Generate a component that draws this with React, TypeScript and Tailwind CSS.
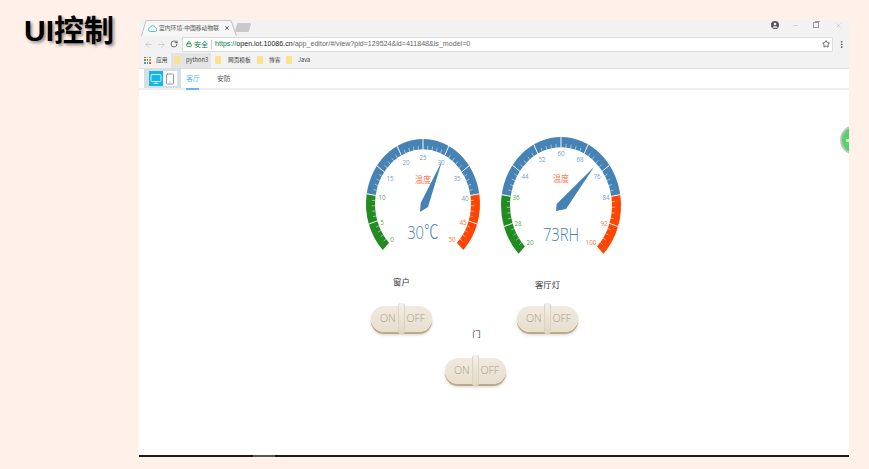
import { ArrowLeft, ArrowRight, RotateCw, Lock, Star, EllipsisVertical, Monitor, Smartphone, Minus, X } from "lucide-react";

const GREEN = "#228b22";
const BLUE = "#4682b4";
const RED = "#ff4500";
const SY = 1.14;

type Label = [string, number, number, string];

function Gauge(props: {
  size: number;
  r: number;
  width: number;
  drop: number;
  labels: Label[];
  value: string;
  needle: string;
  titleY: number;
  valueY: number;
  className: string;
}) {
  const { size, r, width, drop, labels, value, needle, titleY, valueY, className } = props;
  const c = size / 2;
  const cy = c + drop;
  const pt = (rad: number, deg: number) => {
    const a = (deg * Math.PI) / 180;
    return [c + rad * Math.cos(a), cy - rad * SY * Math.sin(a)];
  };
  const band = (ro: number, ri: number, a0: number, a1: number) => {
    const [x0, y0] = pt(ro, a0);
    const [x1, y1] = pt(ro, a1);
    const [x2, y2] = pt(ri, a1);
    const [x3, y3] = pt(ri, a0);
    const large = Math.abs(a0 - a1) > 180 ? 1 : 0;
    return `M${x0} ${y0}A${ro} ${ro * SY} 0 ${large} 1 ${x1} ${y1}L${x2} ${y2}A${ri} ${ri * SY} 0 ${large} 0 ${x3} ${y3}Z`;
  };
  const ang = (f: number) => 225 - 270 * f;
  const ticks = [];
  for (let i = 0; i <= 50; i++) {
    const major = i % 5 === 0;
    const [x0, y0] = pt(r - width - 0.2, ang(i / 50));
    const [x1, y1] = pt(major ? r + 0.2 : r - width + 3.2, ang(i / 50));
    if (i === 0 || i === 50) continue;
    ticks.push(<line key={i} x1={x0} y1={y0} x2={x1} y2={y1} stroke="#fff" strokeOpacity={major ? 0.95 : 0.7} strokeWidth={major ? 1 : 0.7} />);
  }
  return (
    <svg width={size} height={size} viewBox={`0 0 ${size} ${size}`} className={`block shrink-0 ${className}`}>
      <path d={band(r, r - width, ang(0), ang(0.2))} fill={GREEN} />
      <path d={band(r, r - width, ang(0.2), ang(0.8))} fill={BLUE} />
      <path d={band(r, r - width, ang(0.8), ang(1))} fill={RED} />
      {ticks}
      {labels.map(([t, x, y, col]) => (
        <text key={t} transform={`translate(${c + x} ${c + y}) scale(1 1.1)`} fontSize={6.3} fill={col} fillOpacity={0.8} textAnchor="middle" dominantBaseline="central" fontFamily="'Open Sans', sans-serif">
          {t}
        </text>
      ))}
      <text transform={`translate(${c} ${c + titleY}) scale(1 1.1)`} fontSize={8} fill={RED} fillOpacity={0.75} textAnchor="middle" dominantBaseline="central" fontFamily="'Noto Sans CJK SC', sans-serif">
        温度
      </text>
      <polygon points={needle} transform={`translate(${c} ${c})`} fill={BLUE} />
      <text transform={`translate(${c} ${c + valueY}) scale(0.82 1.05)`} fontSize={18} fontWeight={300} fill={BLUE} textAnchor="middle" dominantBaseline="central" fontFamily="'Open Sans', 'Noto Sans CJK SC', sans-serif">
        {value}
      </text>
    </svg>
  );
}

function Toggle() {
  return (
    <div className="relative flex h-[26px] w-[61px] items-center justify-between rounded-[13px] bg-gradient-to-b from-[#f1eadf] to-[#e7decd] pl-[9px] pr-[7px] font-['Open_Sans',sans-serif] text-[10.5px] font-light text-[#a89e8c] shadow-[0_2px_0_#bda98a,0_3px_3px_rgba(120,100,70,0.3)]">
      <span>ON</span>
      <span>OFF</span>
      <div className="absolute -top-[3px] left-[27px] h-[31px] w-[7px] rounded-[3px] border-x border-[#ddd3c0] bg-gradient-to-b from-[#f0f3ee] via-[#ebe3d5] to-[#e2d8c5]" />
    </div>
  );
}

function Folder() {
  return <div className="h-[8px] w-[6px] rounded-[1px] bg-[#fbe28f]" />;
}

const g1: Label[] = [
  ["0", -31, 43, GREEN],
  ["5", -41, 26, GREEN],
  ["10", -41, 1, GREEN],
  ["15", -33, -18, BLUE],
  ["20", -17, -34, BLUE],
  ["25", 0, -39, BLUE],
  ["30", 18, -34, BLUE],
  ["35", 34, -18, BLUE],
  ["40", 42, 2, BLUE],
  ["45", 40, 26, RED],
  ["50", 29, 43, RED],
];
const g2: Label[] = [
  ["20", -31, 45, GREEN],
  ["28", -43, 26, GREEN],
  ["36", -45, 0, GREEN],
  ["44", -36, -21, BLUE],
  ["52", -19, -38, BLUE],
  ["60", 0, -44, BLUE],
  ["68", 19, -38, BLUE],
  ["76", 36, -21, BLUE],
  ["84", 45, 0, BLUE],
  ["92", 43, 26, RED],
  ["100", 30, 45, RED],
];

export default function App() {
  return (
    <div className="flex h-[469px] w-[869px] overflow-hidden bg-[#fff1e9] font-['Noto_Sans_CJK_SC','Noto_Sans',sans-serif]">
      <div className="w-[139px] shrink-0 pl-[24px] pt-[9px]">
        <h1 className="whitespace-nowrap font-['Liberation_Sans','Noto_Sans_CJK_SC',sans-serif] text-[30px] font-bold leading-[44px] text-black [text-shadow:2px_2px_3px_rgba(0,0,0,0.4)]">
          UI控制
        </h1>
      </div>

      <div className="relative mt-[20px] flex h-[437px] w-[710px] shrink-0 flex-col overflow-hidden bg-white">
        {/* tab strip */}
        <div className="flex h-[16px] shrink-0 items-end bg-[#f2f2f2] pl-[2px]">
          <div className="relative flex h-[16px] w-[96px] items-center pl-[7px]">
            <svg width="96" height="16" viewBox="0 0 96 16" className="absolute inset-0">
              <path d="M0.5 16 L5 0.5 H90 L95.5 16" fill="#f6f6f6" stroke="#c4c4c4" strokeWidth="1" />
            </svg>
            <svg width="9" height="7" viewBox="0 0 18 14" className="relative shrink-0">
              <path d="M5 13a4 4 0 0 1-.6-8A5.5 5.5 0 0 1 15 5.5 3.8 3.8 0 0 1 14.5 13Z" fill="none" stroke="#4fc3e8" strokeWidth="2" />
            </svg>
            <span className="relative ml-[2px] w-[62px] whitespace-nowrap text-[5.8px] leading-[10px] text-[#555]">室内环境-中国移动物联</span>
            <X size={6} strokeWidth={3} className="relative ml-[3px] shrink-0 text-[#333]" />
          </div>
          <div className="mb-[4px] ml-[-1px] h-[9px] w-[14px] -skew-x-[15deg] rounded-[1px] bg-[#c9c9c9]" />
          <div className="ml-auto flex items-center pb-[7px] text-[#888]">
            <svg width="8" height="8" viewBox="0 0 16 16" className="mr-[13px]">
              <circle cx="8" cy="8" r="8" fill="#555" />
              <circle cx="8" cy="6" r="2.6" fill="#f2f2f2" />
              <path d="M3.5 12.5c1-2.6 8-2.6 9 0v1h-9z" fill="#f2f2f2" />
            </svg>
            <Minus size={7} strokeWidth={1} className="mr-[14px]" />
            <div className="relative mr-[16px] h-[6px] w-[6px] border border-[#999] bg-[#f2f2f2]">
              <div className="absolute -top-[2px] left-px h-px w-[5px] bg-[#999]" />
            </div>
            <X size={7} strokeWidth={1} className="mr-[7px]" />
          </div>
        </div>

        {/* toolbar */}
        <div className="flex h-[16px] shrink-0 items-center bg-[#f2f2f2] pl-[5px]">
          <ArrowLeft size={9} className="mr-[4px] shrink-0 text-[#c4c4c4]" />
          <ArrowRight size={9} className="mr-[4px] shrink-0 text-[#c4c4c4]" />
          <RotateCw size={8} strokeWidth={2.5} className="mr-[4px] shrink-0 text-[#555]" />
          <div className="flex h-[15px] w-[651px] shrink-0 items-center rounded-[1px] border border-[#dcdcdc] bg-white pl-[3px] pr-[2px]">
            <Lock size={6} strokeWidth={3} className="mr-[2px] text-[#0b8043]" />
            <span className="text-[7px] text-[#0b8043]">安全</span>
            <div className="mx-[3px] h-[9px] w-px bg-[#ccc]" />
            <span className="whitespace-nowrap font-['Liberation_Sans',sans-serif] text-[7.1px] text-[#666]">
              <span className="text-[#0b8043]">https://</span>
              <span className="text-[#222]">open.iot.10086.cn</span>/app_editor/#/view?pid=129524&amp;id=411848&amp;is_model=0
            </span>
            <Star size={8} strokeWidth={2.5} className="ml-auto text-[#444]" />
          </div>
          <EllipsisVertical size={9} strokeWidth={2.5} className="ml-[4px] shrink-0 text-[#555]" />
        </div>

        {/* bookmarks */}
        <div className="flex h-[17px] shrink-0 items-center border-b border-[#dedede] bg-[#f2f2f2] pl-[5px] text-[5.7px] text-[#444]">
          <div className="grid h-[7px] w-[7px] grid-cols-3 gap-px">
            <i className="bg-[#e0564a]" /><i className="bg-[#e0a030]" /><i className="bg-[#4a90d9]" />
            <i className="bg-[#50a050]" /><i className="bg-[#e0564a]" /><i className="bg-[#e0a030]" />
            <i className="bg-[#4a90d9]" /><i className="bg-[#50a050]" /><i className="bg-[#e0564a]" />
          </div>
          <span className="ml-[5px] w-[12px] whitespace-nowrap">应用</span>
          <div className="ml-[3px] flex h-[15px] w-[40px] items-center bg-[#e4e4e4] pl-[3px]">
            <Folder />
            <span className="ml-[6px]">python3</span>
          </div>
          <div className="ml-[4px]"><Folder /></div>
          <span className="ml-[7px] w-[22px] whitespace-nowrap">网页模板</span>
          <div className="ml-[7px]"><Folder /></div>
          <span className="ml-[6px] w-[11px] whitespace-nowrap">博客</span>
          <div className="ml-[6px]"><Folder /></div>
          <span className="ml-[6px]">Java</span>
        </div>

        {/* app tabs */}
        <div className="flex h-[21px] shrink-0 items-stretch border-b-2 border-[#eeeeee] pl-[5px] text-[6.8px]">
          <div className="flex w-[37px] items-center justify-center bg-[#d6e0e1]">
            <div className="flex h-[15px] w-[14px] items-center justify-center bg-[#12b7ea]">
              <Monitor size={12} strokeWidth={1.5} className="text-white" />
            </div>
            <div className="flex h-[15px] w-[14px] items-center justify-center bg-white">
              <Smartphone size={12} strokeWidth={1.5} className="text-[#777]" />
            </div>
          </div>
          <div className="relative ml-[5px] flex w-[14px] items-center justify-center whitespace-nowrap text-[#64b5f6]">
            客厅
            <div className="absolute -bottom-[2px] left-0 h-[2px] w-[13px] bg-[#64b5f6]" />
          </div>
          <div className="ml-[17px] flex items-center text-[#555]">安防</div>
        </div>

        {/* canvas */}
        <div className="flex min-h-0 flex-1 flex-col">
          <div className="ml-[221px] mt-[43px] flex items-start gap-[10px]">
            <Gauge
              size={126}
              r={57}
              width={9}
              drop={8}
              labels={g1}
              value="30℃"
              needle="19,-35 5,11 -3,16 -2.3,7"
              titleY={-17}
              valueY={36}
              className=""
            />
            <Gauge
              size={130}
              r={60}
              width={9}
              drop={8.4}
              labels={g2}
              value="73RH"
              needle="33,-30 5,12 -5,14 -4.4,7"
              titleY={-19}
              valueY={37}
              className="-mt-[1px]"
            />
          </div>

          <div className="-mt-[2px] ml-[232px] flex items-start text-[8.4px] text-[#333]">
            <div className="flex w-[61px] flex-col items-center">
              <div className="mt-[14px] h-[14px] leading-[14px]">窗户</div>
              <div className="mt-[18px]"><Toggle /></div>
            </div>
            <div className="ml-[13px] flex w-[61px] flex-col items-center">
              <div className="ml-[2px] mt-[66px] h-[14px] leading-[14px]">门</div>
              <div className="mt-[18px]"><Toggle /></div>
            </div>
            <div className="ml-[11px] flex w-[61px] flex-col items-center">
              <div className="mt-[17px] h-[14px] leading-[14px]">客厅灯</div>
              <div className="mt-[15px]"><Toggle /></div>
            </div>
          </div>
        </div>

        {/* bottom edge */}
        <div className="h-[2px] shrink-0 bg-[#1a1a1a] pl-[114px]">
          <div className="h-full w-[22px] bg-[#555]" />
        </div>

        {/* floating button clipped by the right edge */}
        <div className="absolute left-[701px] top-[105px] flex h-[30px] w-[30px] items-center rounded-full border-2 border-[#c4c4c4] bg-[#55d36b] pl-[4px]">
          <div className="h-[3px] w-[4px] bg-[#d8f5dd]" />
        </div>
      </div>
    </div>
  );
}
